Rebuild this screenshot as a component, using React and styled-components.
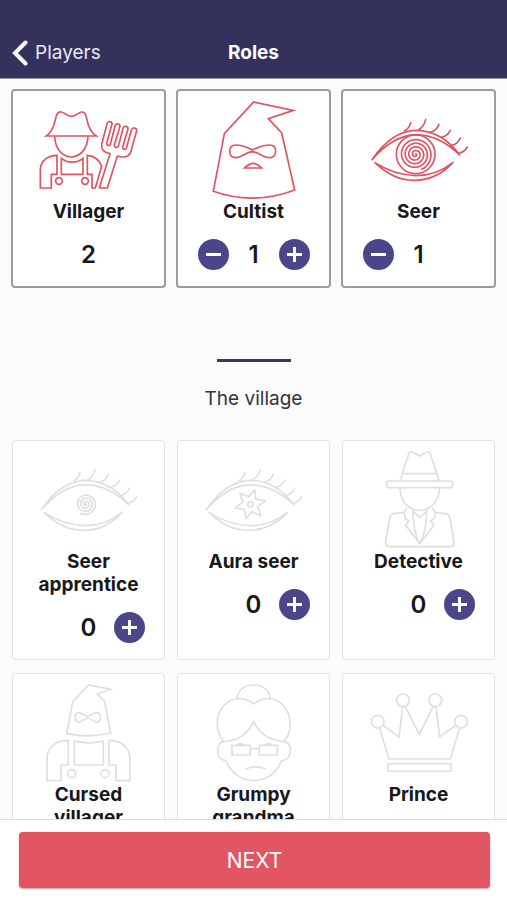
import React, { useState } from 'react';
import styled, { createGlobalStyle, css } from 'styled-components';

const GlobalStyle = createGlobalStyle`
  *, *::before, *::after { box-sizing: border-box; }
  body {
    margin: 0;
    background: #fbfbfb;
    color: #18181a;
    font-family: Inter, "Liberation Sans", sans-serif;
  }
`;

const Screen = styled.div`
  display: flex;
  flex-direction: column;
  height: 100vh;
`;

const Header = styled.header`
  display: grid;
  grid-template-columns: 1fr auto 1fr;
  align-items: center;
  flex: none;
  padding: 37px 12px 9px;
  background: #34325c;
  border-bottom: 1px solid #9a99b4;
  color: #fff;
`;

const BackLink = styled.a`
  display: flex;
  align-items: center;
  gap: 7px;
  color: #e9e9f4;
  font-size: 19px;
  line-height: 32px;
  text-decoration: none;
`;

const BackIcon = styled.svg`
  width: 16px;
  height: 26px;
  fill: none;
  stroke: #fff;
  stroke-width: 4;
`;

const Title = styled.h1`
  margin: 0;
  font-size: 19px;
  font-weight: 700;
  line-height: 32px;
`;

const Content = styled.main`
  flex: 1;
  min-height: 0;
  overflow-y: auto;
  scrollbar-width: none;
  padding-top: 10px;
`;

const CardGrid = styled.div`
  display: grid;
  grid-template-columns: repeat(3, 1fr);
  gap: ${(p) => (p.$selected ? '10px' : '13px 12px')};
  padding: 0 ${(p) => (p.$selected ? '11px' : '12px')};
`;

const Card = styled.article`
  display: flex;
  flex-direction: column;
  align-items: center;
  padding: 8px 16px 16px;
  background: #fff;
  border-radius: 4px;
  ${(p) =>
    p.$selected
      ? css`border: 2px solid #9c9c9c;`
      : css`border: 1px solid #e2e2e2;`}
`;

const RoleIcon = styled.svg`
  display: block;
  flex: none;
  width: 100px;
  height: 100px;
  margin-bottom: 1px;
  fill: none;
  stroke: ${(p) => (p.$selected ? '#e05361' : '#dfdfdf')};
  stroke-width: 5;
`;

const RoleName = styled.h3`
  margin: 0;
  font-size: 19px;
  font-weight: 700;
  line-height: 23px;
  text-align: center;
`;

const Counter = styled.div`
  display: grid;
  grid-template-columns: 31px 50px 31px;
  align-items: center;
  height: 31px;
  margin-top: 16px;
`;

const Count = styled.output`
  grid-column: 2;
  font-size: 24px;
  font-weight: 600;
  line-height: 31px;
  text-align: center;
`;

const RoundButton = styled.button`
  display: grid;
  place-items: center;
  grid-column: ${(p) => p.$column};
  grid-row: 1;
  width: 31px;
  height: 31px;
  padding: 0;
  border: 0;
  border-radius: 50%;
  background: #4b4689;
  cursor: pointer;

  svg {
    width: 17px;
    height: 17px;
    stroke: #fff;
    stroke-width: 3;
  }
`;

const SectionHeading = styled.h2`
  margin: 71px 0 28px;
  font-size: 19px;
  font-weight: 400;
  line-height: 26px;
  text-align: center;
  color: #333;

  &::before {
    content: "";
    display: block;
    width: 74px;
    height: 3px;
    margin: 0 auto 24px;
    background: #3a3768;
  }
`;

const Footer = styled.footer`
  flex: none;
  padding: 12px 17px 12px 19px;
  background: #fff;
  border-top: 1px solid #dcdcdc;
`;

const NextButton = styled.button`
  display: block;
  width: 100%;
  height: 56px;
  border: 0;
  border-radius: 4px;
  background: #e25563;
  box-shadow: 0 1px 2px rgba(0, 0, 0, 0.35);
  color: #fff;
  font: 400 21px/56px Inter, "Liberation Sans", sans-serif;
  cursor: pointer;
`;

/* Archimedean spiral as a polyline path. */
function spiral(cx, cy, radius, turns, endAngle) {
  const steps = Math.round(turns * 36);
  const points = [];
  for (let i = 0; i <= steps; i += 1) {
    const t = i / steps;
    const a = endAngle - (1 - t) * turns * Math.PI * 2;
    const r = radius * t;
    points.push(`${(cx + r * Math.cos(a)).toFixed(1)} ${(cy + r * Math.sin(a)).toFixed(1)}`);
  }
  return `M${points.join('L')}`;
}

function star(cx, cy, outer, inner, count, start) {
  const points = [];
  for (let i = 0; i < count * 2; i += 1) {
    const r = i % 2 ? inner : outer;
    const a = start + (i * Math.PI) / count;
    points.push(`${(cx + r * Math.cos(a)).toFixed(1)} ${(cy + r * Math.sin(a)).toFixed(1)}`);
  }
  return `M${points.join('L')}Z`;
}

const Eye = () => (
  <>
    <path strokeLinejoin="round" d="M105 224C145 165 190 137 238 136C290 137 335 165 368 210C325 168 283 150 238 149C188 150 145 178 105 224Z" />
    <path strokeLinejoin="round" d="M114 233C150 268 190 286 230 286C275 286 315 268 348 232C312 261 275 272 236 272C190 271 150 256 114 233Z" />
    <path strokeLinecap="round" d="M203 138C214 131 219 123 221 113M245 134C258 127 263 116 266 104M280 141C293 139 301 130 306 118M313 157C326 155 334 147 340 136M345 181C357 179 365 170 370 159M366 204C376 203 385 196 391 186" />
  </>
);

const art = {
  villager: {
    box: '117 42 300 300',
    body: (
      <>
        <path d="M139 153C154 143 161 128 166 104C169 84 176 79 184 81C194 83 202 94 214 94C228 94 234 83 244 81C254 80 257 87 261 104C265 128 273 143 289 153Z" />
        <path d="M164 155C166 193 188 216 213 216C239 216 262 193 264 155" />
        <path d="M171 211V268H154V309H121V253C122 227 144 211 171 211Z" />
        <path d="M184 220C203 235 231 235 249 220V268H184Z" />
        <path d="M262 211C282 213 298 225 305 243L286 309H276V268H262Z" />
        <circle cx="177" cy="288" r="10" />
        <circle cx="255" cy="288" r="10" />
        <path strokeLinejoin="round" d="M298 309L330 206C313 203 303 194 305 178L322 113C325 107 337 109 336 117L320 175C319 181 328 184 331 178L346 120C349 114 361 117 360 124L343 181C342 187 352 190 355 184L370 127C373 121 385 124 384 132L368 187C367 193 377 196 379 190L395 133C398 126 411 129 410 137L392 202C386 215 371 219 352 213L322 309Z" />
      </>
    ),
  },
  cultist: {
    box: '102 42 300 300',
    body: (
      <>
        <path d="M251 51L370 76L295 101L335 144L374 315Q251 362 130 319L163 146Z" />
        <path d="M247 195C225 183 209 180 197 180C184 180 179 189 179 199C179 211 186 219 198 218C216 217 230 201 247 200C265 201 279 217 297 218C310 219 317 211 317 199C317 188 311 180 299 180C286 180 270 184 247 195Z" />
        <path d="M223 249C230 241 237 240 241 237Q249 233 258 237C264 240 270 243 275 249Z" />
      </>
    ),
  },
  seer: {
    box: '96 42 300 300',
    body: (
      <>
        <Eye />
        <circle cx="236" cy="208" r="58" />
        <path d={spiral(235, 208, 49, 4.5, 1.2)} />
      </>
    ),
  },
  apprentice: {
    box: '98 42 300 300',
    body: (
      <>
        <Eye />
        <path d={spiral(238, 207, 32, 3.4, 2.1)} />
      </>
    ),
  },
  aura: {
    box: '98 42 300 300',
    body: (
      <>
        <Eye />
        <path strokeLinejoin="round" d={star(237, 208, 46, 23, 6, -1.28)} />
        <circle cx="237" cy="208" r="8" />
      </>
    ),
  },
  detective: {
    box: '95 60 300 300',
    body: (
      <g strokeLinejoin="round">
        <path d="M188 156L215 72Q218 66 226 70L247 81L267 70Q275 66 278 72L306 156M193 134H301" />
        <rect x="147" y="156" width="200" height="20" rx="9" />
        <path d="M188 177C188 216 214 244 247 244C281 244 306 216 306 177" />
        <path d="M209 236L201 250L170 254Q160 256 157 268L145 338Q143 353 158 353H337Q352 353 350 338L338 268Q335 256 325 254L294 250L285 236M201 250L203 268L214 276L205 289L247 344L290 289L280 276L292 268L294 250M227 244C227 285 232 319 247 344C262 319 268 285 268 244M227 247L247 265L268 247" />
      </g>
    ),
  },
  cursed: {
    box: '117 51 300 300',
    body: (
      <>
        <path d="M266 60L332 73L292 87L314 110L332 204Q266 220 200 206L218 111Z" />
        <path d="M263 155C246 146 241 143 235 143C229 143 226 149 226 157C226 166 230 172 238 171C247 170 254 160 263 159C273 160 280 170 289 171C297 172 301 166 301 157C301 149 297 143 290 143C283 143 275 148 263 155Z" />
        <path d="M205 226V300H183V347H141V281C142 246 168 226 205 226Z" />
        <path d="M327 226V300H348V347H390V281C389 246 363 226 327 226Z" />
        <path d="M223 228Q266 239 310 228V300H223Z" />
        <circle cx="215" cy="326" r="12" />
        <circle cx="315" cy="326" r="12" />
      </>
    ),
  },
  grandma: {
    box: '102 51 300 300',
    body: (
      <g strokeLinejoin="round">
        <path d="M201 101C203 75 223 60 251 60C279 60 298 75 301 101" />
        <path d="M251 117C224 94 183 96 161 122C134 154 136 201 162 230C207 228 237 202 251 169C265 202 298 228 342 230C367 201 367 154 341 122C319 96 277 94 251 117Z" />
        <path d="M162 229C145 231 140 251 145 270C149 282 158 286 168 287C182 325 216 347 251 347C287 347 321 325 335 287C346 286 354 282 359 270C364 251 359 231 342 229" />
        <path strokeLinejoin="miter" d="M186 241H240V270H186ZM268 241H322V270H268ZM240 251H268M201 240Q213 232 222 240M286 240Q296 232 306 240" />
        <path d="M226 313Q256 297 287 313" />
      </g>
    ),
  },
  prince: {
    box: '96 51 300 300',
    body: (
      <>
        <circle cx="122" cy="170" r="19" />
        <circle cx="198" cy="106" r="19" />
        <circle cx="295" cy="106" r="19" />
        <circle cx="372" cy="170" r="19" />
        <path d="M127 188L156 282H340L368 188M138 181L186 216L197 125M204 124L247 208L289 124M297 125L308 215L356 181" />
        <rect x="152" y="296" width="190" height="23" />
      </>
    ),
  },
};

const selectedRoles = [
  { id: 'villager', name: 'Villager', count: 2 },
  { id: 'cultist', name: 'Cultist', count: 1, minus: true, plus: true },
  { id: 'seer', name: 'Seer', count: 1, minus: true },
];

const villageRoles = [
  { id: 'apprentice', name: 'Seer apprentice', count: 0, plus: true },
  { id: 'aura', name: 'Aura seer', count: 0, plus: true },
  { id: 'detective', name: 'Detective', count: 0, plus: true },
  { id: 'cursed', name: 'Cursed villager', count: 0, plus: true },
  { id: 'grandma', name: 'Grumpy grandma', count: 0, plus: true },
  { id: 'prince', name: 'Prince', count: 0, plus: true },
];

function RoleCard({ role, selected }) {
  const [count, setCount] = useState(role.count);
  const { box, body } = art[role.id];
  return (
    <Card $selected={selected}>
      <RoleIcon viewBox={box} $selected={selected} aria-hidden="true">
        {body}
      </RoleIcon>
      <RoleName>{role.name}</RoleName>
      <Counter>
        {role.minus && (
          <RoundButton
            $column={1}
            aria-label={`Remove ${role.name}`}
            onClick={() => setCount(Math.max(0, count - 1))}
          >
            <svg viewBox="0 0 17 17"><path d="M1 8.5H16" /></svg>
          </RoundButton>
        )}
        <Count>{count}</Count>
        {role.plus && (
          <RoundButton
            $column={3}
            aria-label={`Add ${role.name}`}
            onClick={() => setCount(count + 1)}
          >
            <svg viewBox="0 0 17 17"><path d="M1 8.5H16M8.5 1V16" /></svg>
          </RoundButton>
        )}
      </Counter>
    </Card>
  );
}

export default function App() {
  return (
    <Screen>
      <GlobalStyle />
      <Header>
        <BackLink href="#players">
          <BackIcon viewBox="0 0 16 26" aria-hidden="true">
            <path strokeLinecap="round" d="M13.5 2.5L3 13L13.5 23.5" />
          </BackIcon>
          Players
        </BackLink>
        <Title>Roles</Title>
      </Header>
      <Content>
        <CardGrid $selected>
          {selectedRoles.map((role) => (
            <RoleCard key={role.id} role={role} selected />
          ))}
        </CardGrid>
        <SectionHeading>The village</SectionHeading>
        <CardGrid>
          {villageRoles.map((role) => (
            <RoleCard key={role.id} role={role} />
          ))}
        </CardGrid>
      </Content>
      <Footer>
        <NextButton>NEXT</NextButton>
      </Footer>
    </Screen>
  );
}
